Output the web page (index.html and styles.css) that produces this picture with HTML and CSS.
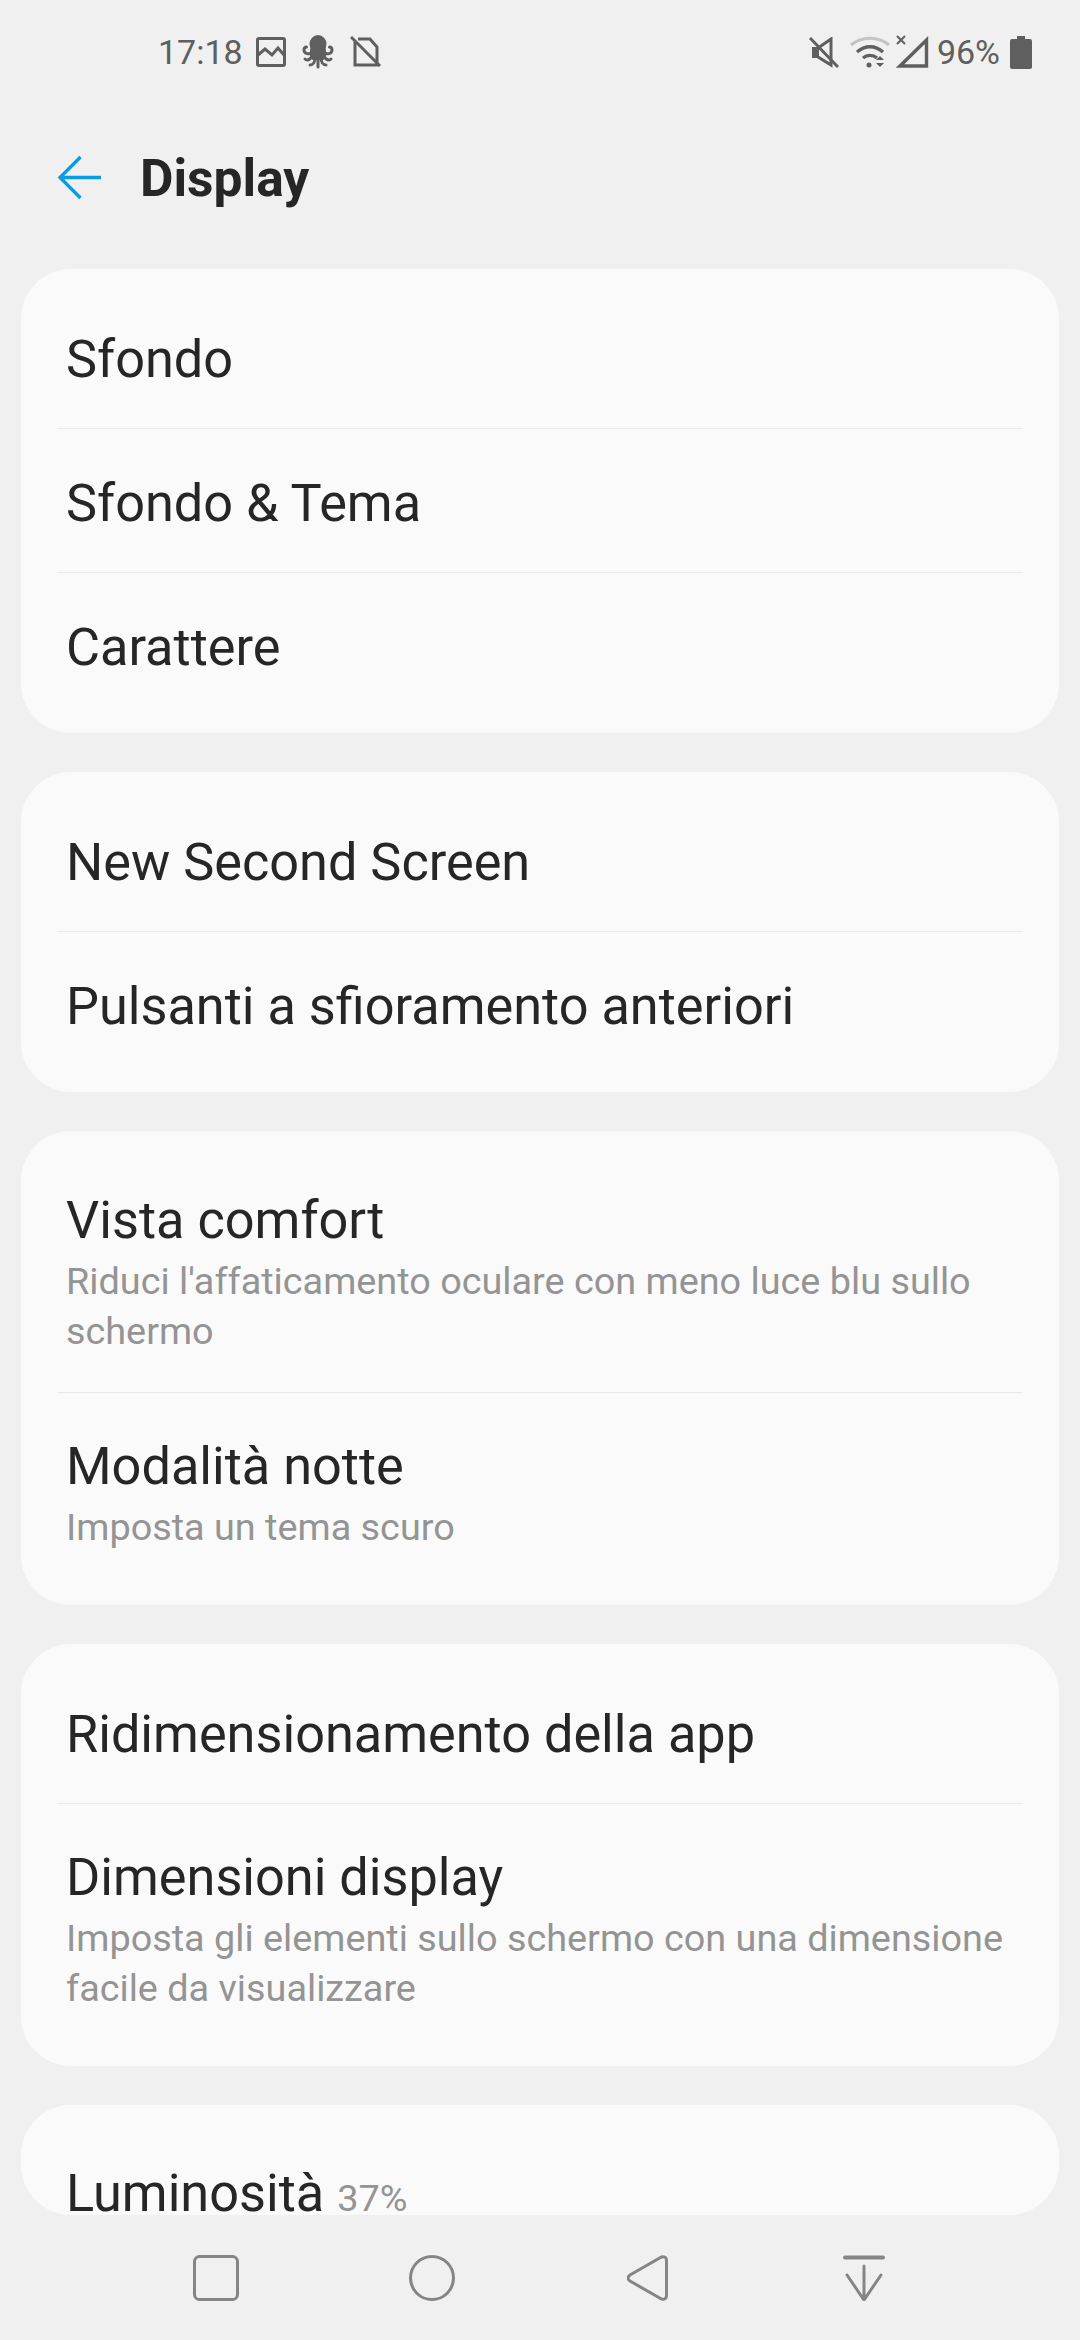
FILE: index.html
```html
<!DOCTYPE html>
<html lang="it">
<head>
<meta charset="utf-8">
<title>Display</title>
<link rel="stylesheet" href="styles.css">
</head>
<body>
<div class="screen">
  <div class="status">
    <div class="status-left">
      <span class="clock">17:18</span>
      <svg class="ic ic-img" width="30" height="30" viewBox="0 0 30 30"><rect x="1.500" y="1.500" width="27" height="27" rx="1.500" fill="none" stroke="#5f5f5f" stroke-width="3"/><path d="M2 18l7-6 7 6 6-7 6 7" fill="none" stroke="#5f5f5f" stroke-width="3"/></svg>
      <svg class="ic ic-oct" width="32" height="34" viewBox="0 0 32 34"><ellipse cx="16" cy="9" rx="8.500" ry="9" fill="#5f5f5f"/><path d="M8.500 12h15l1 8-3 5H10.500l-3-5z" fill="#5f5f5f"/><g fill="none" stroke="#5f5f5f" stroke-width="3" stroke-linecap="round"><path d="M10 17c-2 3-8 2-8-2 0-2 1-3 2.500-3"/><path d="M22 17c2 3 8 2 8-2 0-2-1-3-2.500-3"/><path d="M10 21c-2 4-5 5-7 3"/><path d="M22 21c2 4 5 5 7 3"/><path d="M13 23c0 4-2 7-5 7"/><path d="M19 23c0 4 2 7 5 7"/><path d="M16 24v8"/></g></svg>
      <svg class="ic ic-sim" width="32" height="32" viewBox="0 0 32 32"><path d="M5 6v23h22V11l-7-8H8" fill="none" stroke="#5f5f5f" stroke-width="3"/><path d="M1 1l29 29" stroke="#5f5f5f" stroke-width="3"/></svg>
    </div>
    <div class="status-right">
      <svg class="ic ic-mute" width="30" height="31" viewBox="0 0 30 31"><path d="M4 11h5v9H4z" fill="#5f5f5f" stroke="#5f5f5f" stroke-width="2"/><path d="M9 11l13-9v26l-13-8" fill="none" stroke="#5f5f5f" stroke-width="3"/><path d="M1 1l28 29" stroke="#5f5f5f" stroke-width="3"/></svg>
      <svg class="ic ic-wifi" width="40" height="32" viewBox="0 0 40 32"><path d="M1 9c11-9 27-9 38 0" fill="none" stroke="#c4c4c4" stroke-width="3"/><path d="M7 16c8-7 18-7 26 0" fill="none" stroke="#5f5f5f" stroke-width="3.400"/><path d="M13 22c4-3.500 10-3.500 14 0" fill="none" stroke="#5f5f5f" stroke-width="3.400"/><circle cx="19" cy="29" r="2.500" fill="#5f5f5f"/><path d="M26 24l4-4 4 4zM26 27l4 4 4-4z" fill="#5f5f5f"/></svg>
      <span class="sig">
        <svg class="sig-x" width="10" height="10" viewBox="0 0 10 10"><path d="M1 1l8 8M9 1l-8 8" stroke="#5f5f5f" stroke-width="2"/></svg>
        <svg class="ic-sig" width="33" height="32" viewBox="0 0 33 32"><path d="M30.500 4v26H4z" fill="none" stroke="#5f5f5f" stroke-width="3.400"/></svg>
      </span>
      <span class="batt-text">96%</span>
      <svg class="ic ic-batt" width="22" height="33" viewBox="0 0 22 33"><path d="M7 0h8v3h5a2 2 0 0 1 2 2v26a2 2 0 0 1-2 2H2a2 2 0 0 1-2-2V5a2 2 0 0 1 2-2h5z" fill="#5f5f5f"/></svg>
    </div>
  </div>

  <div class="appbar">
    <svg class="back" width="46" height="46" viewBox="0 0 46 46"><path d="M44 22.500H3M23.500 2L3 22.500 23.500 43" fill="none" stroke="#069de3" stroke-width="3.300"/></svg>
    <h1 class="title">Display</h1>
  </div>

  <main class="list">
    <section class="card">
      <div class="row"><div class="label">Sfondo</div></div>
      <div class="row"><div class="label">Sfondo &amp; Tema</div></div>
      <div class="row"><div class="label">Carattere</div></div>
    </section>
    <section class="card">
      <div class="row"><div class="label">New Second Screen</div></div>
      <div class="row"><div class="label">Pulsanti a sfioramento anteriori</div></div>
    </section>
    <section class="card">
      <div class="row row-sub"><div class="label">Vista comfort</div><div class="sub">Riduci l'affaticamento oculare con meno luce blu sullo schermo</div></div>
      <div class="row row-sub"><div class="label">Modalità notte</div><div class="sub">Imposta un tema scuro</div></div>
    </section>
    <section class="card">
      <div class="row"><div class="label">Ridimensionamento della app</div></div>
      <div class="row row-sub"><div class="label">Dimensioni display</div><div class="sub">Imposta gli elementi sullo schermo con una dimensione facile da visualizzare</div></div>
    </section>
    <section class="card card-cut">
      <div class="row"><div class="label">Luminosità <span class="pct">37%</span></div></div>
    </section>
  </main>

  <nav class="nav">
    <div class="nav-item"><svg width="46" height="46" viewBox="0 0 46 46"><rect x="1.500" y="1.500" width="43" height="43" rx="5" fill="none" stroke="#858585" stroke-width="3"/></svg></div>
    <div class="nav-item"><svg width="46" height="46" viewBox="0 0 46 46"><circle cx="23" cy="23" r="21.500" fill="none" stroke="#858585" stroke-width="3"/></svg></div>
    <div class="nav-item"><svg width="42" height="46" viewBox="0 0 42 46"><path d="M33.500 2.500c2-1.500 6-1 6 3v35c0 4-4 4.500-6 3L3 26c-2.500-1.800-2.500-4.200 0-6z" fill="none" stroke="#858585" stroke-width="3"/></svg></div>
    <div class="nav-item"><svg width="42" height="46" viewBox="0 0 42 46"><path d="M2 2.500h38" fill="none" stroke="#858585" stroke-width="4" stroke-linecap="round"/><path d="M21 11v33M4 20l17 25 17-25" fill="none" stroke="#858585" stroke-width="3" stroke-linecap="round"/></svg></div>
  </nav>
</div>
</body>
</html>
```
FILE: styles.css
```css
* { box-sizing: border-box; }
html, body { margin: 0; padding: 0; }
body { background: #f0f0f0; font-family: Roboto, "Noto Sans", sans-serif; color: #262626; }
.screen { width: 1080px; height: 2340px; display: flex; flex-direction: column; overflow: hidden; }

.status { height: 104px; flex: none; display: flex; justify-content: space-between; align-items: center; padding: 0 48px 0 158px; color: #5f5f5f; }
.status-left, .status-right { display: flex; align-items: center; }
.clock { font-size: 34px; width: 83px; margin-right: 15px; white-space: nowrap; }
.ic { display: block; flex: none; }
.ic-oct { margin-left: 16px; }
.ic-sim { margin-left: 16px; }
.ic-wifi { margin-left: 11px; }
.sig { position: relative; display: block; width: 33px; height: 32px; margin-left: 6px; }
.ic-sig { display: block; }
.sig-x { position: absolute; left: 0; top: -1px; }
.batt-text { font-size: 34px; margin-left: 8px; margin-right: 10px; white-space: nowrap; }

.appbar { height: 165px; flex: none; display: flex; align-items: flex-start; padding: 0 0 0 57px; }
.back { display: block; margin-top: 51px; flex: none; }
.title { margin: 42px 0 0 37px; font-size: 51.500px; line-height: 66px; font-weight: 700; }

.list { height: 1946px; flex: none; display: flex; flex-direction: column; gap: 39px; padding: 0 21px; overflow: hidden; }
.card { flex: none; background: #fafafa; border-radius: 50px; padding: 16px 0; }
.card-cut { height: 110px; overflow: hidden; }
.row { min-height: 144px; margin: 0 36px; padding-top: 6px; display: flex; flex-direction: column; justify-content: center; border-bottom: 1px solid #e8e8e8; }
.row:last-child { border-bottom: 0; }
.row-sub { padding: 39px 0 36px; }
.row-sub:last-child { padding-bottom: 37px; }
.label { font-size: 52.250px; line-height: 70px; margin-left: 9px; color: #262626; white-space: nowrap; }
.sub { font-size: 37.800px; line-height: 50px; margin-left: 9px; color: #949494; }
.pct { font-size: 37.800px; color: #949494; }

.nav { flex: 1; display: grid; grid-template-columns: repeat(4, 216px); padding: 40px 108px 0; }
.nav-item { display: flex; justify-content: center; align-items: flex-start; }
.nav-item svg { display: block; }
```
